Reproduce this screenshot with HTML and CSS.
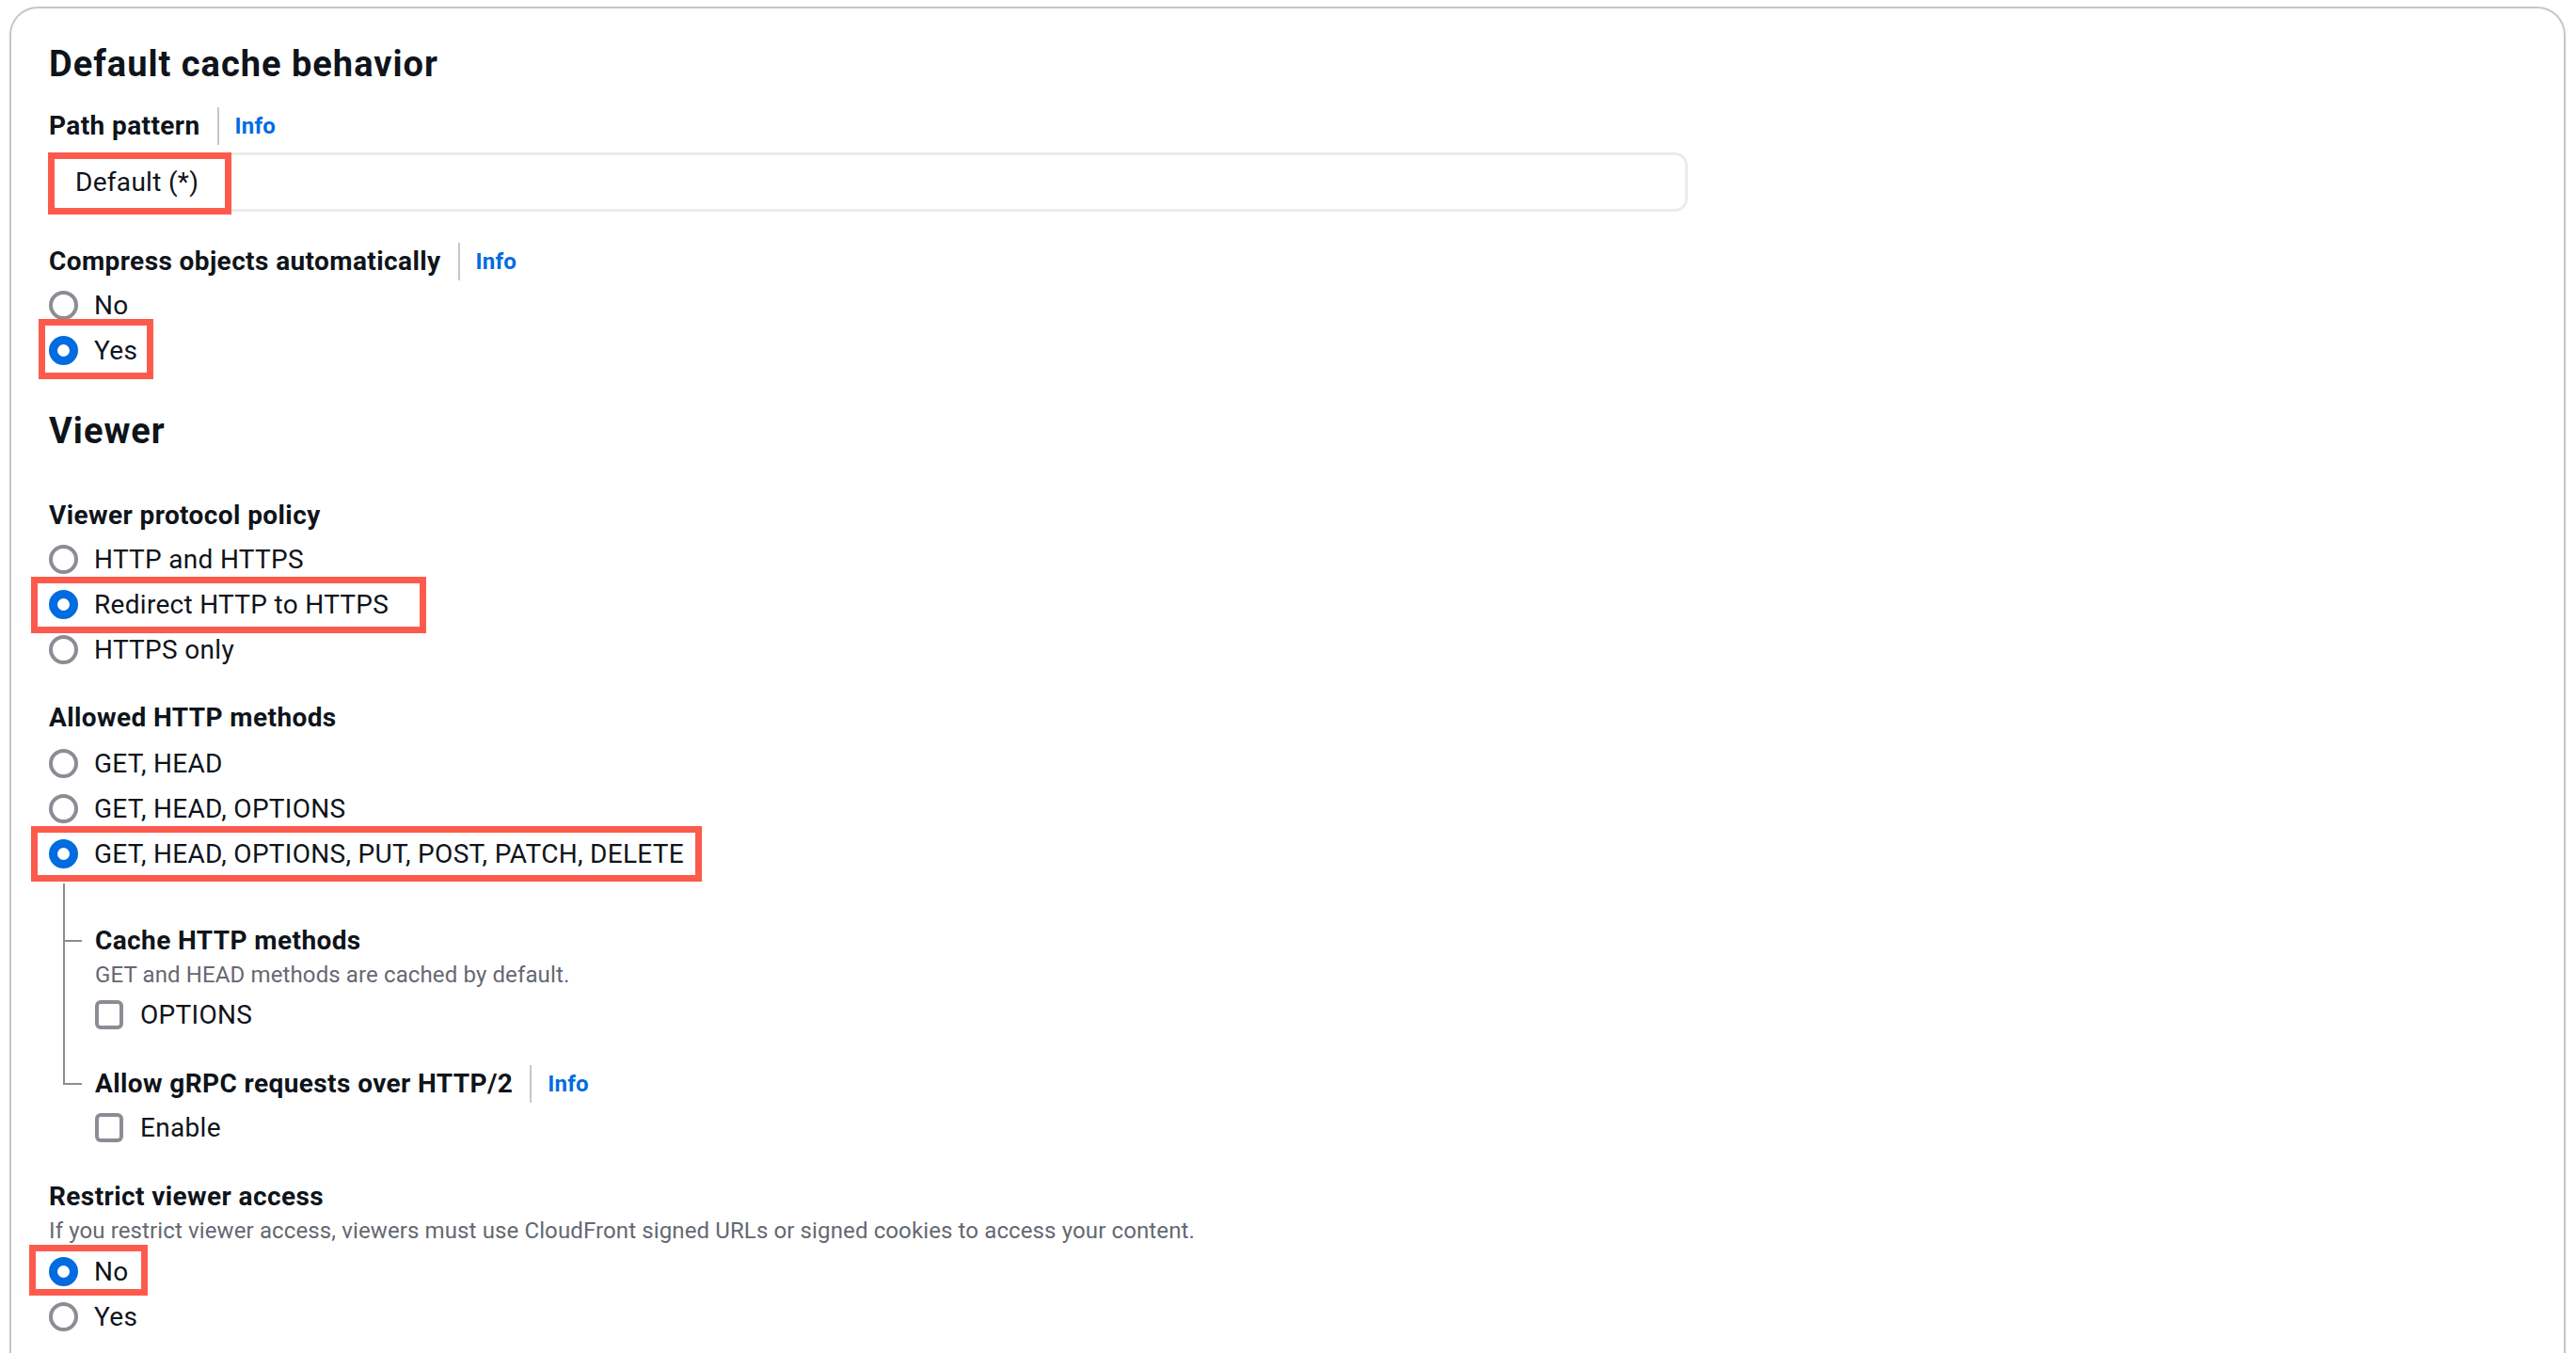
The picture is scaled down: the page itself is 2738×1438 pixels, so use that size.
FILE: index.html
```html
<!DOCTYPE html>
<html lang="en">
<head>
<meta charset="utf-8">
<title>Default cache behavior</title>
<link rel="stylesheet" href="styles.css">
</head>
<body>
<div class="card">
  <h2 class="heading">Default cache behavior</h2>

  <div class="field-label gap-path">Path pattern<span class="sep"></span><a class="info">Info</a></div>
  <div class="input mark mark-default"><span class="input-text">Default (*)</span></div>

  <div class="field-label gap-compress">Compress objects automatically<span class="sep"></span><a class="info">Info</a></div>
  <div class="group gap-g3">
    <div class="radio-row"><span class="radio"></span><span>No</span></div>
    <div class="radio-row mark mark-yes"><span class="radio checked"></span><span>Yes</span></div>
  </div>

  <h2 class="heading gap-viewer">Viewer</h2>

  <div class="field-label gap-vpp">Viewer protocol policy</div>
  <div class="group gap-g2">
    <div class="radio-row"><span class="radio"></span><span>HTTP and HTTPS</span></div>
    <div class="radio-row mark mark-redirect"><span class="radio checked"></span><span>Redirect HTTP to HTTPS</span></div>
    <div class="radio-row"><span class="radio"></span><span>HTTPS only</span></div>
  </div>

  <div class="field-label gap-allowed">Allowed HTTP methods</div>
  <div class="group gap-g4">
    <div class="radio-row"><span class="radio"></span><span>GET, HEAD</span></div>
    <div class="radio-row"><span class="radio"></span><span>GET, HEAD, OPTIONS</span></div>
    <div class="radio-row mark mark-all"><span class="radio checked"></span><span>GET, HEAD, OPTIONS, PUT, POST, PATCH, DELETE</span></div>
  </div>

  <div class="tree">
    <div class="tree-item tree-first">
      <div class="field-label">Cache HTTP methods</div>
      <div class="desc">GET and HEAD methods are cached by default.</div>
      <div class="check-row gap-g3"><span class="checkbox"></span><span>OPTIONS</span></div>
    </div>
    <div class="tree-item tree-last">
      <div class="field-label">Allow gRPC requests over HTTP/2<span class="sep"></span><a class="info">Info</a></div>
      <div class="check-row gap-g2"><span class="checkbox"></span><span>Enable</span></div>
    </div>
  </div>

  <div class="field-label gap-restrict">Restrict viewer access</div>
  <div class="desc">If you restrict viewer access, viewers must use CloudFront signed URLs or signed cookies to access your content.</div>
  <div class="group gap-g35">
    <div class="radio-row mark mark-no"><span class="radio checked"></span><span>No</span></div>
    <div class="radio-row"><span class="radio"></span><span>Yes</span></div>
  </div>
</div>
</body>
</html>
```
FILE: styles.css
```css
html, body {
  margin: 0;
  padding: 0;
  background: #ffffff;
}
body {
  font-family: Roboto, "Noto Sans", sans-serif;
  font-size: 28px;
  letter-spacing: 0.3px;
  color: #0f141a;
  overflow: hidden;
}
.card {
  box-sizing: border-box;
  margin: 7px 0 0 10px;
  width: 2717px;
  min-height: 1500px;
  border: 2px solid #c6c6cd;
  border-bottom: 0;
  border-radius: 30px 30px 0 0;
  padding: 35px 40px 0;
}
.heading {
  margin: 0;
  font-size: 38px;
  font-weight: 700;
  letter-spacing: 1px;
  line-height: 48px;
}
.field-label {
  display: flex;
  align-items: center;
  height: 40px;
  line-height: 40px;
  font-weight: 700;
  letter-spacing: 0.4px;
}
.sep {
  width: 2px;
  height: 40px;
  background: #c6c6cd;
  margin: 0 17px 0 18px;
}
.info {
  color: #006ce0;
  font-size: 24px;
  font-weight: 700;
  letter-spacing: 0.2px;
}
.input {
  box-sizing: border-box;
  margin-top: 8.5px;
  width: 1742px;
  height: 63px;
  border: 3px solid #e9ebed;
  border-radius: 14px;
  padding-left: 25px;
  display: flex;
  align-items: center;
}
.desc {
  font-size: 24px;
  line-height: 32px;
  letter-spacing: 0.12px;
  color: #656871;
}
.group {
  display: flex;
  flex-direction: column;
}
.radio-row {
  display: flex;
  align-items: center;
  height: 48px;
  gap: 17px;
  align-self: flex-start;
}
.radio {
  box-sizing: border-box;
  width: 31px;
  height: 31px;
  border-radius: 50%;
  border: 4px solid #8c8c94;
  background: #ffffff;
  flex: none;
}
.radio.checked {
  border: 9.5px solid #006ce0;
}
.check-row {
  display: flex;
  align-items: center;
  height: 48px;
  gap: 18px;
}
.checkbox {
  box-sizing: border-box;
  width: 30px;
  height: 31px;
  border: 4px solid #8c8c94;
  border-radius: 6px;
  flex: none;
}

/* vertical rhythm */
.gap-path { margin-top: 21.5px; }
.gap-compress { margin-top: 32.5px; }
.gap-g2 { margin-top: 2.5px; }
.gap-g3 { margin-top: 3px; }
.gap-g35 { margin-top: 3.5px; }
.gap-g4 { margin-top: 4.5px; }
.gap-viewer { margin-top: 37px; }
.gap-vpp { margin-top: 46.5px; }
.gap-allowed { margin-top: 28.5px; }
.gap-restrict { margin-top: 29px; }

/* nested tree of sub-settings */
.tree {
  margin-top: 7.5px;
  margin-left: 14.5px;
}
.tree-item {
  position: relative;
}
.tree-first {
  border-left: 2px solid #8c8c94;
  padding: 40.5px 0 0 32.5px;
}
.tree-first::before {
  content: "";
  position: absolute;
  left: 0;
  top: 59.5px;
  width: 18px;
  height: 2px;
  background: #8c8c94;
}
.tree-last {
  padding: 29.5px 0 0 34.5px;
}
.tree-last::before {
  content: "";
  position: absolute;
  left: 0;
  top: 0;
  width: 20px;
  height: 50.5px;
  box-sizing: border-box;
  border-left: 2px solid #8c8c94;
  border-bottom: 2px solid #8c8c94;
}

/* red annotation boxes drawn over the highlighted options */
.mark {
  position: relative;
}
.mark::after {
  content: "";
  position: absolute;
  box-sizing: border-box;
  border: 7px solid #fd5a4e;
  pointer-events: none;
}
.mark-default::after { left: -4px; top: -3px; width: 195px; height: 66px; }
.mark-yes::after { left: -11px; top: -9.5px; width: 122px; height: 64px; }
.mark-redirect::after { left: -19px; top: -5.5px; width: 420px; height: 60px; }
.mark-all::after { left: -19px; top: -5.5px; width: 713px; height: 59px; }
.mark-no::after { left: -21px; top: -4px; width: 126px; height: 54px; }
```
